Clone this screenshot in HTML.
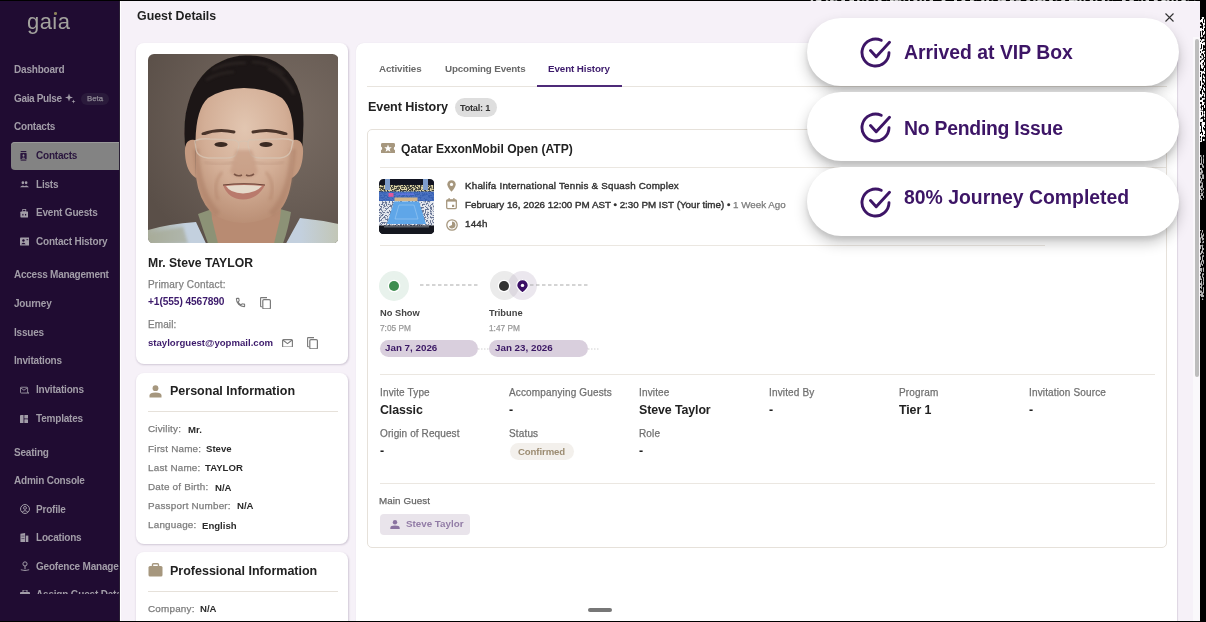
<!DOCTYPE html>
<html><head><meta charset="utf-8"><style>
html,body{margin:0;padding:0;width:1206px;height:622px;overflow:hidden;background:#fff;position:relative}
.t{position:absolute;white-space:nowrap;font-family:"Liberation Sans", sans-serif;will-change:transform}
</style></head><body>
<div style="position:absolute;left:0px;top:0px;width:120px;height:622px;background:#200c32"></div>
<div class="t" style="left:27.3px;top:10.68px;font-size:22px;line-height:22px;color:#a3a39e;font-weight:400;letter-spacing:0.45px;">gaia</div>
<div style="position:absolute;left:52.5px;top:9px;width:5.5px;height:7.2px;background:#200c32"></div>
<div style="position:absolute;left:53.9px;top:12.4px;width:2.7px;height:2.7px;background:#8c8259;border-radius:50%"></div>
<div class="t" style="left:14px;top:64.94px;font-size:10px;line-height:10px;color:#a29da8;font-weight:700;letter-spacing:-0.2px;">Dashboard</div>
<div class="t" style="left:14px;top:93.53px;font-size:10px;line-height:10px;color:#a29da8;font-weight:700;letter-spacing:-0.35px;">Gaia Pulse</div>
<svg style="position:absolute;left:65px;top:93px" width="11" height="11" viewBox="0 0 11 11"><path d="M4 0.5 L5 3.5 L8 4.5 L5 5.5 L4 8.5 L3 5.5 L0 4.5 L3 3.5Z" fill="#a29da8"/><path d="M8.5 6.5 L9 8 L10.5 8.5 L9 9 L8.5 10.5 L8 9 L6.5 8.5 L8 8Z" fill="#a29da8"/></svg>
<div style="position:absolute;left:81px;top:93px;width:28px;height:12px;background:#2a1a3b;border-radius:6px"></div>
<div class="t" style="left:86.5px;top:95.20px;font-size:7.8px;line-height:7.8px;color:#8f8a96;font-weight:400;letter-spacing:0px;-webkit-text-stroke:0.25px #8f8a96;">Beta</div>
<div class="t" style="left:14px;top:122.03px;font-size:10px;line-height:10px;color:#a29da8;font-weight:700;letter-spacing:-0.2px;">Contacts</div>
<div style="position:absolute;left:11px;top:141.8px;width:115px;height:28px;background:#838383;border-radius:4px;box-shadow:inset 0 1px 0 #9a9a9a"></div>
<div class="t" style="left:36px;top:150.53px;font-size:10px;line-height:10px;color:#2a163e;font-weight:700;letter-spacing:-0.2px;">Contacts</div>
<div class="t" style="left:36px;top:179.53px;font-size:10px;line-height:10px;color:#a29da8;font-weight:700;letter-spacing:-0.2px;">Lists</div>
<div class="t" style="left:36px;top:207.53px;font-size:10px;line-height:10px;color:#a29da8;font-weight:700;letter-spacing:-0.2px;">Event Guests</div>
<div class="t" style="left:36px;top:236.53px;font-size:10px;line-height:10px;color:#a29da8;font-weight:700;letter-spacing:-0.2px;">Contact History</div>
<div class="t" style="left:14px;top:270.14px;font-size:10px;line-height:10px;color:#a29da8;font-weight:700;letter-spacing:-0.25px;">Access Management</div>
<div class="t" style="left:14px;top:298.54px;font-size:10px;line-height:10px;color:#a29da8;font-weight:700;letter-spacing:-0.2px;">Journey</div>
<div class="t" style="left:14px;top:327.54px;font-size:10px;line-height:10px;color:#a29da8;font-weight:700;letter-spacing:-0.2px;">Issues</div>
<div class="t" style="left:14px;top:355.54px;font-size:10px;line-height:10px;color:#a29da8;font-weight:700;letter-spacing:-0.2px;">Invitations</div>
<div class="t" style="left:36px;top:384.54px;font-size:10px;line-height:10px;color:#a29da8;font-weight:700;letter-spacing:-0.2px;">Invitations</div>
<div class="t" style="left:36px;top:413.54px;font-size:10px;line-height:10px;color:#a29da8;font-weight:700;letter-spacing:-0.2px;">Templates</div>
<div class="t" style="left:14px;top:447.54px;font-size:10px;line-height:10px;color:#a29da8;font-weight:700;letter-spacing:-0.2px;">Seating</div>
<div class="t" style="left:14px;top:475.54px;font-size:10px;line-height:10px;color:#a29da8;font-weight:700;letter-spacing:-0.2px;">Admin Console</div>
<div class="t" style="left:36px;top:504.54px;font-size:10px;line-height:10px;color:#a29da8;font-weight:700;letter-spacing:-0.2px;">Profile</div>
<div class="t" style="left:36px;top:532.53px;font-size:10px;line-height:10px;color:#a29da8;font-weight:700;letter-spacing:-0.2px;">Locations</div>
<div class="t" style="left:36px;top:561.53px;font-size:10px;line-height:10px;color:#a29da8;font-weight:700;letter-spacing:-0.2px;">Geofence Management</div>
<div style="position:absolute;left:0;top:580px;width:120px;height:14px;overflow:hidden"><div class="t" style="left:36px;top:9.53px;font-size:10px;line-height:10px;color:#a29da8;font-weight:700;letter-spacing:-0.2px">Assign Guest Data</div></div>
<svg style="position:absolute;left:19.5px;top:150.5px" width="7" height="10.5" viewBox="0 0 10 11" preserveAspectRatio="none"><rect x="1" y="0" width="8" height="1.2" fill="#2a163e"/><rect x="1" y="9.8" width="8" height="1.2" fill="#2a163e"/><rect x="0.5" y="2" width="9" height="7" rx="1" fill="#2a163e"/><circle cx="5" cy="4.6" r="1.3" fill="#8b8b8b"/><path d="M2.5 8 Q5 5.5 7.5 8Z" fill="#8b8b8b"/></svg>
<svg style="position:absolute;left:19.7px;top:181px" width="9" height="7" viewBox="0 0 11 8" preserveAspectRatio="none"><circle cx="3.5" cy="2" r="1.6" fill="#a29da8"/><circle cx="7.5" cy="2" r="1.6" fill="#a29da8"/><path d="M0 7 Q3.5 3 7 7Z M4.5 7 Q7.5 3 11 7Z" fill="#a29da8"/></svg>
<svg style="position:absolute;left:19.7px;top:208.5px" width="8.5" height="9" viewBox="0 0 11 11" preserveAspectRatio="none"><rect x="0.5" y="3" width="10" height="7.5" rx="1" fill="#a29da8"/><rect x="3.5" y="0.5" width="4" height="3" fill="none" stroke="#a29da8" stroke-width="1"/><rect x="3" y="6" width="1.5" height="2" fill="#200c32"/><rect x="6.5" y="6" width="1.5" height="2" fill="#200c32"/></svg>
<svg style="position:absolute;left:19.5px;top:236.5px" width="9.5" height="9" viewBox="0 0 11 10" preserveAspectRatio="none"><rect x="0" y="0.5" width="11" height="9" rx="1" fill="#a29da8"/><circle cx="4" cy="4" r="1.4" fill="#200c32"/><path d="M1.5 8 Q4 5 6.5 8Z" fill="#200c32"/><rect x="7.5" y="2.5" width="2" height="1" fill="#200c32"/></svg>
<svg style="position:absolute;left:19.5px;top:385.5px" width="9.5" height="8.5" viewBox="0 0 12 11" preserveAspectRatio="none"><rect x="0.6" y="1.6" width="9" height="7.5" rx="1" fill="none" stroke="#a29da8" stroke-width="1.1"/><path d="M1 2.5 L5 5.5 L9 2.5" fill="none" stroke="#a29da8" stroke-width="1.1"/><path d="M8.5 9 L11 9 M10 8 L11 9 L10 10" stroke="#a29da8" stroke-width="1" fill="none"/></svg>
<svg style="position:absolute;left:20px;top:414.5px" width="8.2" height="8.2" viewBox="0 0 10 10"><rect x="0" y="0" width="4.3" height="10" rx="0.5" fill="#a29da8"/><rect x="5.3" y="0" width="4.7" height="4.3" rx="0.5" fill="#a29da8"/><rect x="5.3" y="5.3" width="4.7" height="4.7" rx="0.5" fill="#a29da8"/></svg>
<svg style="position:absolute;left:19.5px;top:503.5px" width="10" height="10" viewBox="0 0 11 11"><circle cx="5.5" cy="5.5" r="4.9" fill="none" stroke="#a29da8" stroke-width="1.1"/><circle cx="5.5" cy="4.3" r="1.6" fill="none" stroke="#a29da8" stroke-width="1"/><path d="M2.5 8.6 Q5.5 5.8 8.5 8.6" fill="none" stroke="#a29da8" stroke-width="1"/></svg>
<svg style="position:absolute;left:20px;top:532.5px" width="8.5" height="9.5" preserveAspectRatio="none" viewBox="0 0 10 11"><path d="M0.5 1 L6 0 L6 11 L0.5 11Z" fill="#a29da8"/><rect x="6.8" y="3" width="3" height="8" fill="#a29da8"/><rect x="2" y="3" width="1" height="1" fill="#200c32"/><rect x="4" y="3" width="1" height="1" fill="#200c32"/><rect x="2" y="6" width="1" height="1" fill="#200c32"/><rect x="4" y="6" width="1" height="1" fill="#200c32"/></svg>
<svg style="position:absolute;left:19.5px;top:561px" width="10" height="10" viewBox="0 0 12 12"><circle cx="6" cy="3.5" r="2.5" fill="none" stroke="#a29da8" stroke-width="1.2"/><path d="M6 6 L6 10" stroke="#a29da8" stroke-width="1.2"/><path d="M1 10.5 Q6 12.5 11 10.5" fill="none" stroke="#a29da8" stroke-width="1.1"/></svg>
<div style="position:absolute;left:118.6px;top:0px;width:0.8px;height:622px;background:#1b0a2b"></div>
<div style="position:absolute;left:119.3px;top:0px;width:0.7px;height:622px;background:#2b2136"></div>
<div style="position:absolute;left:120px;top:1px;width:1080px;height:620px;background:#f6f1f8"></div>
<div style="position:absolute;left:120px;top:1px;width:1px;height:620px;background:#ffffff"></div>
<div class="t" style="left:137px;top:10.10px;font-size:12.4px;line-height:12.4px;color:#1f1f1f;font-weight:700;letter-spacing:0px;">Guest Details</div>
<svg style="position:absolute;left:1165px;top:13px" width="9" height="9" viewBox="0 0 9 9"><path d="M0.5 0.5 L8.5 8.5 M8.5 0.5 L0.5 8.5" stroke="#333" stroke-width="1.1"/></svg>
<div style="position:absolute;left:136px;top:42.5px;width:212px;height:321px;background:#fff;border-radius:8px;box-shadow:0.5px 1px 2px rgba(60,40,80,0.2)"></div>
<div style="position:absolute;left:136px;top:373px;width:212px;height:171px;background:#fff;border-radius:8px;box-shadow:0.5px 1px 2px rgba(60,40,80,0.2)"></div>
<div style="position:absolute;left:136px;top:552px;width:212px;height:80px;background:#fff;border-radius:8px;box-shadow:0.5px 1px 2px rgba(60,40,80,0.2)"></div>
<svg style="position:absolute;left:147.5px;top:53.5px" width="190.5" height="189.5" viewBox="0 0 190.5 189.5">
<defs>
<clipPath id="pc"><rect x="0" y="0" width="190.5" height="189.5" rx="6"/></clipPath>
<radialGradient id="bg" cx="0.7" cy="0.35" r="0.8"><stop offset="0" stop-color="#7a6d64"/><stop offset="0.5" stop-color="#6b5f57"/><stop offset="1" stop-color="#5a4f48"/></radialGradient>
<radialGradient id="skin" cx="0.5" cy="0.3" r="0.75"><stop offset="0" stop-color="#e2c6b1"/><stop offset="0.55" stop-color="#d3ae96"/><stop offset="1" stop-color="#b68a70"/></radialGradient>
<linearGradient id="shirt" x1="0" y1="0" x2="1" y2="0"><stop offset="0" stop-color="#a9ad9c"/><stop offset="0.2" stop-color="#c3d0de"/><stop offset="0.8" stop-color="#c3d0de"/><stop offset="1" stop-color="#c2c6b6"/></linearGradient>
<filter id="b1" x="-20%" y="-20%" width="140%" height="140%"><feGaussianBlur stdDeviation="1.5"/></filter>
<filter id="b2" x="-20%" y="-20%" width="140%" height="140%"><feGaussianBlur stdDeviation="0.7"/></filter>
</defs>
<g clip-path="url(#pc)">
<rect width="190.5" height="189.5" fill="url(#bg)"/>
<!-- shirt -->
<path d="M0 176 Q20 170 48 168 L58 189.5 L0 189.5Z M190.5 170 Q172 166 152 164 L138 189.5 L190.5 189.5Z" fill="url(#shirt)" filter="url(#b2)"/>
<path d="M0 180 Q15 176 35 173 L40 189.5 L0 189.5Z" fill="#a7ab98" opacity="0.7" filter="url(#b1)"/>
<path d="M50 160 Q55 176 60 189.5 L72 189.5 Q66 176 64 155Z M143 158 Q140 176 135 189.5 L124 189.5 Q130 176 132 155Z" fill="#8c9276" filter="url(#b2)"/>
<!-- neck -->
<path d="M62 140 L64 165 L70 189.5 L126 189.5 L132 165 L134 140Z" fill="#b88b72" filter="url(#b2)"/>
<!-- hair -->
<path d="M37 92 Q35 66 40 50 Q44 34 54 22 Q62 12 74 7 Q86 1 100 1.5 Q116 1 128 8 Q142 16 149 32 Q156 48 155.5 70 Q155 82 154.5 92 Q150 100 96 100 Q42 100 37 92Z" fill="#1e1916" filter="url(#b2)"/>
<path d="M64 16 Q80 8 98 9 M104 8 Q122 8 136 20 M58 26 Q72 18 86 18" stroke="#4a403a" stroke-width="1.6" fill="none" opacity="0.55" filter="url(#b1)"/>
<path d="M120 14 Q138 22 146 40" stroke="#5a4e46" stroke-width="2" fill="none" opacity="0.4" filter="url(#b1)"/>
<!-- ears -->
<path d="M47 86 Q36 84 37 100 Q38 118 48 124Z" fill="#c49a80" filter="url(#b2)"/>
<path d="M145 86 Q156 84 155 100 Q154 118 144 124Z" fill="#c49a80" filter="url(#b2)"/>
<!-- face -->
<path d="M47.5 87 Q48 55 60 44 Q76 34 96 34 Q118 34 134 44 Q145.8 55 145.8 87 Q145 123 144 123 Q141 148 130 158 Q114 169 95.5 169 Q76 169 63 158 Q51 146 48 123Z" fill="url(#skin)" filter="url(#b2)"/>
<path d="M48 95 Q50 140 70 160" stroke="#a97c64" stroke-width="6" fill="none" opacity="0.45" filter="url(#b1)"/>
<path d="M145 95 Q143 140 123 160" stroke="#a97c64" stroke-width="6" fill="none" opacity="0.45" filter="url(#b1)"/>
<!-- eyebrows -->
<path d="M55 80 Q70 74 86 78" stroke="#4b362c" stroke-width="3" fill="none" stroke-linecap="round" filter="url(#b2)"/>
<path d="M105 78 Q122 74 138 80" stroke="#4b362c" stroke-width="3" fill="none" stroke-linecap="round" filter="url(#b2)"/>
<!-- eyes -->
<ellipse cx="73" cy="90.5" rx="6.5" ry="2.5" fill="#3a2a22" filter="url(#b2)"/>
<ellipse cx="118" cy="90.5" rx="6.5" ry="2.5" fill="#3a2a22" filter="url(#b2)"/>
<!-- glasses -->
<path d="M47 87 Q52 84 62 85 L86 86 Q91 87 91 91 L89 99 Q87 104 79 104 L60 104 Q50 103 48 96Z" fill="none" stroke="#d6c2b0" stroke-width="1.3" opacity="0.9"/>
<path d="M101 86 L130 85 Q140 84 145 87 L143 96 Q141 103 132 104 L112 104 Q104 104 102 99 L100 91 Q100 87 101 86Z" fill="none" stroke="#d6c2b0" stroke-width="1.3" opacity="0.9"/>
<path d="M91 88 Q96 86 100 88" stroke="#d6c2b0" stroke-width="1.2" fill="none"/>
<!-- eye shadows under glasses -->
<path d="M56 108 Q72 113 86 108" stroke="#b8907a" stroke-width="2" fill="none" opacity="0.5" filter="url(#b1)"/>
<path d="M106 108 Q120 113 136 108" stroke="#b8907a" stroke-width="2" fill="none" opacity="0.5" filter="url(#b1)"/>
<!-- nose -->
<path d="M88 96 Q84 110 82 118 Q86 124 96 124 Q106 124 110 118 Q108 110 104 96" fill="#c0937a" opacity="0.55" filter="url(#b1)"/>
<path d="M86 120 Q90 123 94 121 M98 121 Q102 123 106 120" stroke="#7c5646" stroke-width="1.6" fill="none" filter="url(#b2)"/>
<!-- smile lines -->
<path d="M74 118 Q64 130 70 146" stroke="#a9785f" stroke-width="2" fill="none" opacity="0.5" filter="url(#b1)"/>
<path d="M118 118 Q128 130 122 146" stroke="#a9785f" stroke-width="2" fill="none" opacity="0.5" filter="url(#b1)"/>
<!-- mouth -->
<path d="M75 131 Q96 128 117 131 Q110 145 95 145.5 Q80 145 75 131Z" fill="#b97a6c" filter="url(#b2)"/>
<path d="M78 132 Q96 130 114 132 Q108 139 95 139.5 Q82 139 78 132Z" fill="#e6dacb"/>
<path d="M75 131 Q96 128.5 117 131" stroke="#6a4438" stroke-width="1.1" fill="none"/>
</g>
</svg>

<div class="t" style="left:148px;top:256.57px;font-size:12.2px;line-height:12.2px;color:#222;font-weight:700;letter-spacing:0px;">Mr. Steve TAYLOR</div>
<div class="t" style="left:148px;top:280.14px;font-size:10px;line-height:10px;color:#808080;font-weight:400;letter-spacing:0.2px;-webkit-text-stroke:0.25px #808080;">Primary Contact:</div>
<div class="t" style="left:148px;top:297.37px;font-size:10.2px;line-height:10.2px;color:#3c1a6b;font-weight:700;letter-spacing:-0.1px;">+1(555) 4567890</div>
<svg style="position:absolute;left:235px;top:297px" width="11" height="11" viewBox="0 0 24 24"><path d="M6.6 10.8c1.4 2.8 3.8 5.1 6.6 6.6l2.2-2.2c.3-.3.7-.4 1-.2 1.1.4 2.3.6 3.6.6.6 0 1 .4 1 1V20c0 .6-.4 1-1 1C10.6 21 3 13.4 3 4c0-.6.4-1 1-1h3.5c.6 0 1 .4 1 1 0 1.3.2 2.5.6 3.6.1.3 0 .7-.2 1L6.6 10.8z" fill="none" stroke="#777" stroke-width="2.3"/></svg>
<svg style="position:absolute;left:259.5px;top:296.6px" width="11.5" height="12.5" viewBox="0 0 11.5 12.5"><path d="M2.3 9.8 L1 9.8 Q0.6 9.8 0.6 9.3 L0.6 1.1 Q0.6 0.6 1.1 0.6 L7 0.6" fill="none" stroke="#7a7a7a" stroke-width="1.1"/><rect x="2.8" y="2.6" width="7.6" height="9.3" rx="1.2" fill="none" stroke="#7a7a7a" stroke-width="1.2"/></svg>
<div class="t" style="left:148px;top:320.34px;font-size:10px;line-height:10px;color:#808080;font-weight:400;letter-spacing:0.1px;-webkit-text-stroke:0.25px #808080;">Email:</div>
<div class="t" style="left:148px;top:338.37px;font-size:9.6px;line-height:9.6px;color:#3c1a6b;font-weight:700;letter-spacing:0px;">staylorguest@yopmail.com</div>
<svg style="position:absolute;left:282px;top:338.6px" width="11" height="8.8" viewBox="0 0 11 8.8"><rect x="0.6" y="0.6" width="9.8" height="7.6" rx="1" fill="none" stroke="#7a7a7a" stroke-width="1.15"/><path d="M0.8 1 L5.5 4.6 L10.2 1" fill="none" stroke="#7a7a7a" stroke-width="1.1"/></svg>
<svg style="position:absolute;left:306.5px;top:336.6px" width="11.5" height="12.5" viewBox="0 0 11.5 12.5"><path d="M2.3 9.8 L1 9.8 Q0.6 9.8 0.6 9.3 L0.6 1.1 Q0.6 0.6 1.1 0.6 L7 0.6" fill="none" stroke="#7a7a7a" stroke-width="1.1"/><rect x="2.8" y="2.6" width="7.6" height="9.3" rx="1.2" fill="none" stroke="#7a7a7a" stroke-width="1.2"/></svg>
<svg style="position:absolute;left:149px;top:385px" width="13" height="13" viewBox="0 0 13 13"><circle cx="6.5" cy="3.2" r="2.9" fill="#a6977e"/><path d="M0.5 12.5 L0.5 10.5 Q0.5 7.5 6.5 7.5 Q12.5 7.5 12.5 10.5 L12.5 12.5Z" fill="#a6977e"/></svg>
<div class="t" style="left:170px;top:385.42px;font-size:12.5px;line-height:12.5px;color:#222;font-weight:700;letter-spacing:0px;">Personal Information</div>
<div style="position:absolute;left:148px;top:410.5px;width:190px;height:1px;background:#e6e1da"></div>
<div class="t" style="left:148px;top:424.32px;font-size:9.9px;line-height:9.9px;color:#7c7c7c;font-weight:400;letter-spacing:0.2px;-webkit-text-stroke:0.25px #7c7c7c;">Civility:</div>
<div class="t" style="left:188px;top:424.57px;font-size:9.6px;line-height:9.6px;color:#2b2b2b;font-weight:700;letter-spacing:0px;">Mr.</div>
<div class="t" style="left:148px;top:443.62px;font-size:9.9px;line-height:9.9px;color:#7c7c7c;font-weight:400;letter-spacing:0.2px;-webkit-text-stroke:0.25px #7c7c7c;">First Name:</div>
<div class="t" style="left:206px;top:443.87px;font-size:9.6px;line-height:9.6px;color:#2b2b2b;font-weight:700;letter-spacing:0px;">Steve</div>
<div class="t" style="left:148px;top:463.02px;font-size:9.9px;line-height:9.9px;color:#7c7c7c;font-weight:400;letter-spacing:0.2px;-webkit-text-stroke:0.25px #7c7c7c;">Last Name:</div>
<div class="t" style="left:205px;top:463.27px;font-size:9.6px;line-height:9.6px;color:#2b2b2b;font-weight:700;letter-spacing:0px;">TAYLOR</div>
<div class="t" style="left:148px;top:482.42px;font-size:9.9px;line-height:9.9px;color:#7c7c7c;font-weight:400;letter-spacing:0.2px;-webkit-text-stroke:0.25px #7c7c7c;">Date of Birth:</div>
<div class="t" style="left:215px;top:482.67px;font-size:9.6px;line-height:9.6px;color:#2b2b2b;font-weight:700;letter-spacing:0px;">N/A</div>
<div class="t" style="left:148px;top:501.22px;font-size:9.9px;line-height:9.9px;color:#7c7c7c;font-weight:400;letter-spacing:0.2px;-webkit-text-stroke:0.25px #7c7c7c;">Passport Number:</div>
<div class="t" style="left:237px;top:501.47px;font-size:9.6px;line-height:9.6px;color:#2b2b2b;font-weight:700;letter-spacing:0px;">N/A</div>
<div class="t" style="left:148px;top:520.42px;font-size:9.9px;line-height:9.9px;color:#7c7c7c;font-weight:400;letter-spacing:0.2px;-webkit-text-stroke:0.25px #7c7c7c;">Language:</div>
<div class="t" style="left:202px;top:520.67px;font-size:9.6px;line-height:9.6px;color:#2b2b2b;font-weight:700;letter-spacing:0px;">English</div>
<svg style="position:absolute;left:148px;top:563px" width="15" height="14" viewBox="0 0 15 14"><rect x="0.5" y="3" width="14" height="10.5" rx="1.5" fill="#a6977e"/><rect x="4.5" y="0.7" width="6" height="3" rx="1" fill="none" stroke="#a6977e" stroke-width="1.4"/></svg>
<div class="t" style="left:170px;top:565.42px;font-size:12.5px;line-height:12.5px;color:#222;font-weight:700;letter-spacing:0px;">Professional Information</div>
<div style="position:absolute;left:148px;top:590.5px;width:190px;height:1px;background:#e6e1da"></div>
<div class="t" style="left:148px;top:603.62px;font-size:9.9px;line-height:9.9px;color:#7c7c7c;font-weight:400;letter-spacing:0.2px;-webkit-text-stroke:0.25px #7c7c7c;">Company:</div>
<div class="t" style="left:200px;top:603.87px;font-size:9.6px;line-height:9.6px;color:#2b2b2b;font-weight:700;letter-spacing:0px;">N/A</div>
<div style="position:absolute;left:356px;top:42.5px;width:821px;height:600px;background:#fff;border-radius:8px;box-shadow:0.5px 0 1px rgba(60,40,80,0.12)"></div>
<div class="t" style="left:379px;top:63.90px;font-size:9.8px;line-height:9.8px;color:#6a6a6a;font-weight:700;letter-spacing:-0.1px;">Activities</div>
<div class="t" style="left:445px;top:63.90px;font-size:9.8px;line-height:9.8px;color:#6a6a6a;font-weight:700;letter-spacing:-0.15px;">Upcoming Events</div>
<div class="t" style="left:548px;top:63.90px;font-size:9.8px;line-height:9.8px;color:#3c1a6b;font-weight:700;letter-spacing:-0.1px;">Event History</div>
<div style="position:absolute;left:367px;top:86px;width:800px;height:1px;background:#e8e4de"></div>
<div style="position:absolute;left:537px;top:85px;width:85px;height:2px;background:#4e2a78"></div>
<div class="t" style="left:368px;top:100.73px;font-size:12.6px;line-height:12.6px;color:#222;font-weight:700;letter-spacing:-0.1px;">Event History</div>
<div style="position:absolute;left:454.6px;top:98.1px;width:42.3px;height:19px;background:#dedede;border-radius:9.5px"></div>
<div class="t" style="left:460px;top:103.71px;font-size:9.2px;line-height:9.2px;color:#333;font-weight:700;letter-spacing:-0.25px;">Total: 1</div>
<div style="position:absolute;left:367px;top:128.5px;width:798px;height:417px;border:1px solid #e6e1da;border-radius:5px;background:#fff"></div>
<svg style="position:absolute;left:381px;top:142.7px" width="14" height="10.8" viewBox="0 0 14 10.8"><path d="M1.5 0 H12.5 Q14 0 14 1.5 V3.6 Q12.8 4.2 12.8 5.4 Q12.8 6.6 14 7.2 V9.3 Q14 10.8 12.5 10.8 H1.5 Q0 10.8 0 9.3 V7.2 Q1.2 6.6 1.2 5.4 Q1.2 4.2 0 3.6 V1.5 Q0 0 1.5 0Z" fill="#a6977e"/><path d="M7 1.6 L8.05 4.2 L10.8 4.3 L8.65 6.05 L9.4 8.7 L7 7.2 L4.6 8.7 L5.35 6.05 L3.2 4.3 L5.95 4.2Z" fill="#fff"/></svg>
<div class="t" style="left:401.4px;top:142.56px;font-size:12.1px;line-height:12.1px;color:#222;font-weight:700;letter-spacing:0px;">Qatar ExxonMobil Open (ATP)</div>
<div style="position:absolute;left:379.5px;top:167px;width:786px;height:1px;background:#ebe7e1"></div>
<svg style="position:absolute;left:379.2px;top:179.2px" width="55.3" height="55" viewBox="0 0 55.3 55">
<defs>
<clipPath id="tc"><rect width="55.3" height="55" rx="4.5"/></clipPath>
<filter id="noise" x="0" y="0" width="100%" height="100%"><feTurbulence type="fractalNoise" baseFrequency="0.6" numOctaves="2" seed="5"/><feColorMatrix type="matrix" values="0 0 0 0 0.14  0 0 0 0 0.18  0 0 0 0 0.3  0 0 0 -9 4.7"/></filter>
<filter id="noise2" x="0" y="0" width="100%" height="100%"><feTurbulence type="fractalNoise" baseFrequency="0.7" numOctaves="1" seed="11"/><feColorMatrix type="matrix" values="0 0 0 0 0.72  0 0 0 0 0.66  0 0 0 0 0.38  0 0 0 -9 4.9"/></filter>
<filter id="tb"><feGaussianBlur stdDeviation="0.4"/></filter>
</defs>
<g clip-path="url(#tc)">
<rect width="55.3" height="55" fill="#121522"/>
<rect x="0" y="6" width="55.3" height="7" fill="#3d3f3a"/>
<rect x="0" y="6" width="55.3" height="7" filter="url(#noise2)"/>
<rect x="0" y="13" width="55.3" height="35" fill="#e6e9ef"/>
<rect x="0" y="13" width="55.3" height="35" filter="url(#noise)"/>
<rect x="0" y="12.5" width="55.3" height="9.5" fill="#2f5db8" opacity="0.85"/>
<rect x="6" y="0" width="5" height="11" fill="#7d9ccc"/>
<rect x="44" y="0" width="5" height="11" fill="#7d9ccc"/>
<rect x="9.5" y="14" width="5" height="3.8" fill="#e0589a"/>
<rect x="17" y="14.5" width="18" height="1.3" fill="#6a78f0" opacity="0.8"/>
<rect x="15.5" y="18.5" width="23" height="3.6" fill="#d2b58a"/>
<path d="M15 22.5 L40 22.5 L47 45 L8 45Z" fill="#5ea6e8" filter="url(#tb)"/>
<path d="M20 26 L35 26 L39 40 L16 40Z" fill="none" stroke="#a9d2f4" stroke-width="0.5"/>
<rect x="0" y="46.5" width="55.3" height="8.5" fill="#15171f"/>
<rect x="5" y="47" width="45" height="1.5" fill="#8a8f9a" opacity="0.6"/>
</g>
</svg>

<svg style="position:absolute;left:447px;top:180px" width="9" height="12" viewBox="0 0 9 12"><path d="M4.5 0.3 C2 0.3 0.3 2.1 0.3 4.4 C0.3 7.2 4.5 11.7 4.5 11.7 C4.5 11.7 8.7 7.2 8.7 4.4 C8.7 2.1 7 0.3 4.5 0.3Z" fill="#a6977e"/><circle cx="4.5" cy="4.4" r="1.6" fill="#fff"/></svg>
<div class="t" style="left:464.6px;top:181.40px;font-size:9.8px;line-height:9.8px;color:#333;font-weight:400;letter-spacing:0.22px;-webkit-text-stroke:0.4px #333;">Khalifa International Tennis &amp; Squash Complex</div>
<svg style="position:absolute;left:446.3px;top:198.4px" width="11" height="11.3" viewBox="0 0 11 11.3"><rect x="0.7" y="1.8" width="9.6" height="8.8" rx="1" fill="none" stroke="#a6977e" stroke-width="1.3"/><rect x="0.7" y="1.8" width="9.6" height="1.8" fill="#a6977e"/><rect x="2.5" y="0" width="1.2" height="2.5" fill="#a6977e"/><rect x="7.3" y="0" width="1.2" height="2.5" fill="#a6977e"/><rect x="6" y="6.8" width="2.2" height="2.2" fill="#a6977e"/></svg>
<div class="t" style="left:464.6px;top:200.00px;font-size:9.8px;line-height:9.8px;color:#333;font-weight:400;letter-spacing:0px;-webkit-text-stroke:0.4px #333;">February 16, 2026 12:00 PM AST • 2:30 PM IST (Your time) • <span style="color:#7a7a7a;-webkit-text-stroke:0.25px #7a7a7a">1 Week Ago</span></div>
<svg style="position:absolute;left:445.5px;top:218.5px" width="12" height="12" viewBox="0 0 12 12"><circle cx="6" cy="6" r="5.2" fill="none" stroke="#a6977e" stroke-width="1.3"/><path d="M6 2.5 A3.5 3.5 0 1 1 2.8 7.5 L6 6Z" fill="#a6977e"/></svg>
<div class="t" style="left:464.6px;top:219.40px;font-size:9.8px;line-height:9.8px;color:#333;font-weight:400;letter-spacing:0.2px;-webkit-text-stroke:0.4px #333;">144h</div>
<div style="position:absolute;left:379.5px;top:245px;width:665px;height:1px;background:#ebe7e1"></div>
<div style="position:absolute;left:379.3px;top:270.8px;width:30px;height:30px;background:#e8f2ec;border-radius:50%"></div>
<div style="position:absolute;left:389.2px;top:280.5px;width:10.2px;height:10.2px;background:#3e8d50;border-radius:50%;box-shadow:0 0 0 1.3px #fff"></div>
<svg style="position:absolute;left:420px;top:284px" width="60" height="2"><line x1="0" y1="1" x2="60" y2="1" stroke="#aaaaaa" stroke-width="1.2" stroke-dasharray="3.5 2.5"/></svg>
<div style="position:absolute;left:489.5px;top:270.8px;width:29.6px;height:29.6px;background:#ebebeb;border-radius:50%"></div>
<div style="position:absolute;left:507.5px;top:270.8px;width:29.6px;height:29.6px;background:rgba(188,175,198,0.3);border-radius:50%"></div>
<div style="position:absolute;left:499.3px;top:280.8px;width:9.8px;height:9.8px;background:#333;border-radius:50%;box-shadow:0 0 0 1.3px #fff"></div>
<svg style="position:absolute;left:515.5px;top:278.5px" width="13" height="14.5" viewBox="0 0 13 14.5"><path d="M6.5 0.6 C3.2 0.6 0.7 3.1 0.7 6.3 C0.7 9.8 6.5 13.9 6.5 13.9 C6.5 13.9 12.3 9.8 12.3 6.3 C12.3 3.1 9.8 0.6 6.5 0.6Z" fill="#3b0f66" stroke="#fff" stroke-width="1.2"/><circle cx="6.5" cy="6.4" r="1.7" fill="#fff"/></svg>
<svg style="position:absolute;left:530px;top:284px" width="60" height="2"><line x1="0" y1="1" x2="60" y2="1" stroke="#aaaaaa" stroke-width="1.2" stroke-dasharray="3.5 2.5"/></svg>
<div class="t" style="left:379.6px;top:309.23px;font-size:9.3px;line-height:9.3px;color:#444;font-weight:700;letter-spacing:0px;">No Show</div>
<div class="t" style="left:379.6px;top:323.97px;font-size:8.3px;line-height:8.3px;color:#9a9a9a;font-weight:400;letter-spacing:0px;-webkit-text-stroke:0.25px #9a9a9a;">7:05 PM</div>
<div class="t" style="left:489.4px;top:309.23px;font-size:9.3px;line-height:9.3px;color:#444;font-weight:700;letter-spacing:0px;">Tribune</div>
<div class="t" style="left:489.4px;top:323.97px;font-size:8.3px;line-height:8.3px;color:#9a9a9a;font-weight:400;letter-spacing:0px;-webkit-text-stroke:0.25px #9a9a9a;">1:47 PM</div>
<div style="position:absolute;left:379.6px;top:340.2px;width:98.5px;height:17px;background:#d9cfdd;border-radius:8.5px"></div>
<div style="position:absolute;left:489.4px;top:340.2px;width:98.5px;height:17px;background:#d9cfdd;border-radius:8.5px"></div>
<div class="t" style="left:385px;top:342.80px;font-size:9.8px;line-height:9.8px;color:#3a1764;font-weight:700;letter-spacing:0px;">Jan 7, 2026</div>
<div class="t" style="left:495px;top:342.80px;font-size:9.8px;line-height:9.8px;color:#3a1764;font-weight:700;letter-spacing:0px;">Jan 23, 2026</div>
<svg style="position:absolute;left:478px;top:348px" width="12" height="2"><line x1="0" y1="1" x2="12" y2="1" stroke="#d0d0d0" stroke-width="1" stroke-dasharray="1.5 1.5"/></svg>
<svg style="position:absolute;left:588px;top:348px" width="12" height="2"><line x1="0" y1="1" x2="12" y2="1" stroke="#d0d0d0" stroke-width="1" stroke-dasharray="1.5 1.5"/></svg>
<div style="position:absolute;left:379.5px;top:373.5px;width:775px;height:1px;background:#ebe7e1"></div>
<div class="t" style="left:379.5px;top:387.64px;font-size:10px;line-height:10px;color:#707070;font-weight:400;letter-spacing:0.15px;-webkit-text-stroke:0.25px #707070;">Invite Type</div>
<div class="t" style="left:379.5px;top:404.25px;font-size:12.4px;line-height:12.4px;color:#222;font-weight:700;letter-spacing:-0.1px;">Classic</div>
<div class="t" style="left:509.3px;top:387.64px;font-size:10px;line-height:10px;color:#707070;font-weight:400;letter-spacing:0.15px;-webkit-text-stroke:0.25px #707070;">Accompanying Guests</div>
<div class="t" style="left:509.3px;top:404.25px;font-size:12.4px;line-height:12.4px;color:#222;font-weight:700;letter-spacing:-0.1px;">-</div>
<div class="t" style="left:639.4px;top:387.64px;font-size:10px;line-height:10px;color:#707070;font-weight:400;letter-spacing:0.15px;-webkit-text-stroke:0.25px #707070;">Invitee</div>
<div class="t" style="left:639.4px;top:404.25px;font-size:12.4px;line-height:12.4px;color:#222;font-weight:700;letter-spacing:-0.1px;">Steve Taylor</div>
<div class="t" style="left:769.4px;top:387.64px;font-size:10px;line-height:10px;color:#707070;font-weight:400;letter-spacing:0.15px;-webkit-text-stroke:0.25px #707070;">Invited By</div>
<div class="t" style="left:769.4px;top:404.25px;font-size:12.4px;line-height:12.4px;color:#222;font-weight:700;letter-spacing:-0.1px;">-</div>
<div class="t" style="left:899.4px;top:387.64px;font-size:10px;line-height:10px;color:#707070;font-weight:400;letter-spacing:0.15px;-webkit-text-stroke:0.25px #707070;">Program</div>
<div class="t" style="left:899.4px;top:404.25px;font-size:12.4px;line-height:12.4px;color:#222;font-weight:700;letter-spacing:-0.1px;">Tier 1</div>
<div class="t" style="left:1029.4px;top:387.64px;font-size:10px;line-height:10px;color:#707070;font-weight:400;letter-spacing:0.15px;-webkit-text-stroke:0.25px #707070;">Invitation Source</div>
<div class="t" style="left:1029.4px;top:404.25px;font-size:12.4px;line-height:12.4px;color:#222;font-weight:700;letter-spacing:-0.1px;">-</div>
<div class="t" style="left:379.5px;top:428.64px;font-size:10px;line-height:10px;color:#707070;font-weight:400;letter-spacing:0.1px;-webkit-text-stroke:0.25px #707070;">Origin of Request</div>
<div class="t" style="left:379.5px;top:445.00px;font-size:12.4px;line-height:12.4px;color:#222;font-weight:700;letter-spacing:0px;">-</div>
<div class="t" style="left:509.3px;top:428.64px;font-size:10px;line-height:10px;color:#707070;font-weight:400;letter-spacing:0.15px;-webkit-text-stroke:0.25px #707070;">Status</div>
<div style="position:absolute;left:509.8px;top:443.4px;width:64.5px;height:16.8px;background:#f3f0ec;border-radius:8.4px"></div>
<div class="t" style="left:517.5px;top:446.87px;font-size:9.6px;line-height:9.6px;color:#9c8c72;font-weight:700;letter-spacing:-0.1px;">Confirmed</div>
<div class="t" style="left:639.4px;top:428.64px;font-size:10px;line-height:10px;color:#707070;font-weight:400;letter-spacing:0.15px;-webkit-text-stroke:0.25px #707070;">Role</div>
<div class="t" style="left:639.4px;top:445.00px;font-size:12.4px;line-height:12.4px;color:#222;font-weight:700;letter-spacing:0px;">-</div>
<div style="position:absolute;left:379.5px;top:482.5px;width:775px;height:1px;background:#ebe7e1"></div>
<div class="t" style="left:379.3px;top:495.90px;font-size:9.8px;line-height:9.8px;color:#666;font-weight:400;letter-spacing:0.1px;-webkit-text-stroke:0.25px #666;">Main Guest</div>
<div style="position:absolute;left:379.7px;top:514px;width:90.5px;height:21px;background:#e9e4eb;border-radius:4px"></div>
<svg style="position:absolute;left:389.5px;top:519.5px" width="10" height="9.5" viewBox="0 0 10 9.5"><circle cx="5" cy="2.3" r="2.2" fill="#8a72a0"/><path d="M0.3 9.3 L0.3 8 Q0.3 5.6 5 5.6 Q9.7 5.6 9.7 8 L9.7 9.3Z" fill="#8a72a0"/></svg>
<div class="t" style="left:405.7px;top:519.30px;font-size:9.8px;line-height:9.8px;color:#927ca6;font-weight:700;letter-spacing:0px;">Steve Taylor</div>
<div style="position:absolute;left:588px;top:608px;width:24px;height:4px;background:#777;border-radius:2px"></div>
<div style="position:absolute;left:1177px;top:42.5px;width:1px;height:580px;background:#e0d8e4"></div>
<div style="position:absolute;left:1193px;top:37px;width:7px;height:585px;background:#faf8fb"></div>
<div style="position:absolute;left:1194.8px;top:39px;width:4px;height:337.5px;background:#bdbdbd;border-radius:2px"></div>
<div style="position:absolute;left:807px;top:17.5px;width:372px;height:68px;background:#fff;border-radius:34.0px;box-shadow:0 7px 14px rgba(0,0,0,0.22), 0 4px 4px rgba(0,0,0,0.08)"></div>
<svg style="position:absolute;left:860px;top:37.4px" width="31" height="31" viewBox="0 0 31 31"><path d="M21.2 3.3 A13.5 13.5 0 1 0 29 15.8" fill="none" stroke="#3d1566" stroke-width="2.9" stroke-linecap="round"/><path d="M10.5 13.5 L16.2 19.8 L29.5 5.3" fill="none" stroke="#3d1566" stroke-width="2.9" stroke-linecap="round" stroke-linejoin="round"/></svg>
<div class="t" style="left:903.5px;top:43.33px;font-size:19.4px;line-height:19.4px;color:#3d1566;font-weight:700;letter-spacing:0px;">Arrived at VIP Box</div>
<div style="position:absolute;left:807px;top:92.3px;width:372px;height:68.5px;background:#fff;border-radius:34.25px;box-shadow:0 7px 14px rgba(0,0,0,0.22), 0 4px 4px rgba(0,0,0,0.08)"></div>
<svg style="position:absolute;left:860px;top:111.9px" width="31" height="31" viewBox="0 0 31 31"><path d="M21.2 3.3 A13.5 13.5 0 1 0 29 15.8" fill="none" stroke="#3d1566" stroke-width="2.9" stroke-linecap="round"/><path d="M10.5 13.5 L16.2 19.8 L29.5 5.3" fill="none" stroke="#3d1566" stroke-width="2.9" stroke-linecap="round" stroke-linejoin="round"/></svg>
<div class="t" style="left:903.5px;top:118.88px;font-size:19.4px;line-height:19.4px;color:#3d1566;font-weight:700;letter-spacing:-0.25px;">No Pending Issue</div>
<div style="position:absolute;left:807px;top:167.3px;width:372px;height:68.5px;background:#fff;border-radius:34.25px;box-shadow:0 7px 14px rgba(0,0,0,0.22), 0 4px 4px rgba(0,0,0,0.08)"></div>
<svg style="position:absolute;left:860px;top:186.5px" width="31" height="31" viewBox="0 0 31 31"><path d="M21.2 3.3 A13.5 13.5 0 1 0 29 15.8" fill="none" stroke="#3d1566" stroke-width="2.9" stroke-linecap="round"/><path d="M10.5 13.5 L16.2 19.8 L29.5 5.3" fill="none" stroke="#3d1566" stroke-width="2.9" stroke-linecap="round" stroke-linejoin="round"/></svg>
<div class="t" style="left:903.5px;top:187.98px;font-size:19.4px;line-height:19.4px;color:#3d1566;font-weight:700;letter-spacing:0px;">80% Journey Completed</div>
<div style="position:absolute;left:0;top:580px;width:120px;height:14px;overflow:hidden"><svg style="position:absolute;left:19.5px;top:9.5px" width="10" height="10" viewBox="0 0 10 10"><rect x="0" y="2" width="10" height="8" rx="1" fill="#a29da8"/><rect x="3" y="0" width="4" height="2.5" fill="none" stroke="#a29da8" stroke-width="1"/></svg></div>
<div style="position:absolute;left:0px;top:0px;width:1206px;height:1px;background:#000"></div>
<div style="position:absolute;left:0px;top:621px;width:1206px;height:1px;background:#000"></div>
<svg style="position:absolute;left:810px;top:0" width="390" height="1.5" viewBox="0 0 390 1.5"><defs><filter id="nzt" x="0" y="0" width="100%" height="100%"><feTurbulence type="fractalNoise" baseFrequency="0.25 0.9" numOctaves="1" seed="4"/><feColorMatrix type="matrix" values="0 0 0 0 1  0 0 0 0 1  0 0 0 0 1  -12 0 0 0 6.4"/></filter></defs><rect x="0" y="0" width="390" height="1.2" filter="url(#nzt)" opacity="0.8"/></svg>
<div style="position:absolute;left:1200px;top:0px;width:6px;height:622px;background:#000"></div>
<svg style="position:absolute;left:1200px;top:0" width="6" height="622" viewBox="0 0 6 622"><defs><filter id="nz" x="0" y="0" width="100%" height="100%"><feTurbulence type="fractalNoise" baseFrequency="0.8 0.35" numOctaves="1" seed="9"/><feColorMatrix type="matrix" values="0 0 0 0 1  0 0 0 0 1  0 0 0 0 1  -12 0 0 0 6.6"/></filter></defs><rect x="0" y="17" width="5" height="125" filter="url(#nz)"/><rect x="0" y="155" width="4" height="45" filter="url(#nz)" opacity="0.7"/><rect x="0" y="230" width="4" height="70" filter="url(#nz)" opacity="0.7"/></svg>
</body></html>
